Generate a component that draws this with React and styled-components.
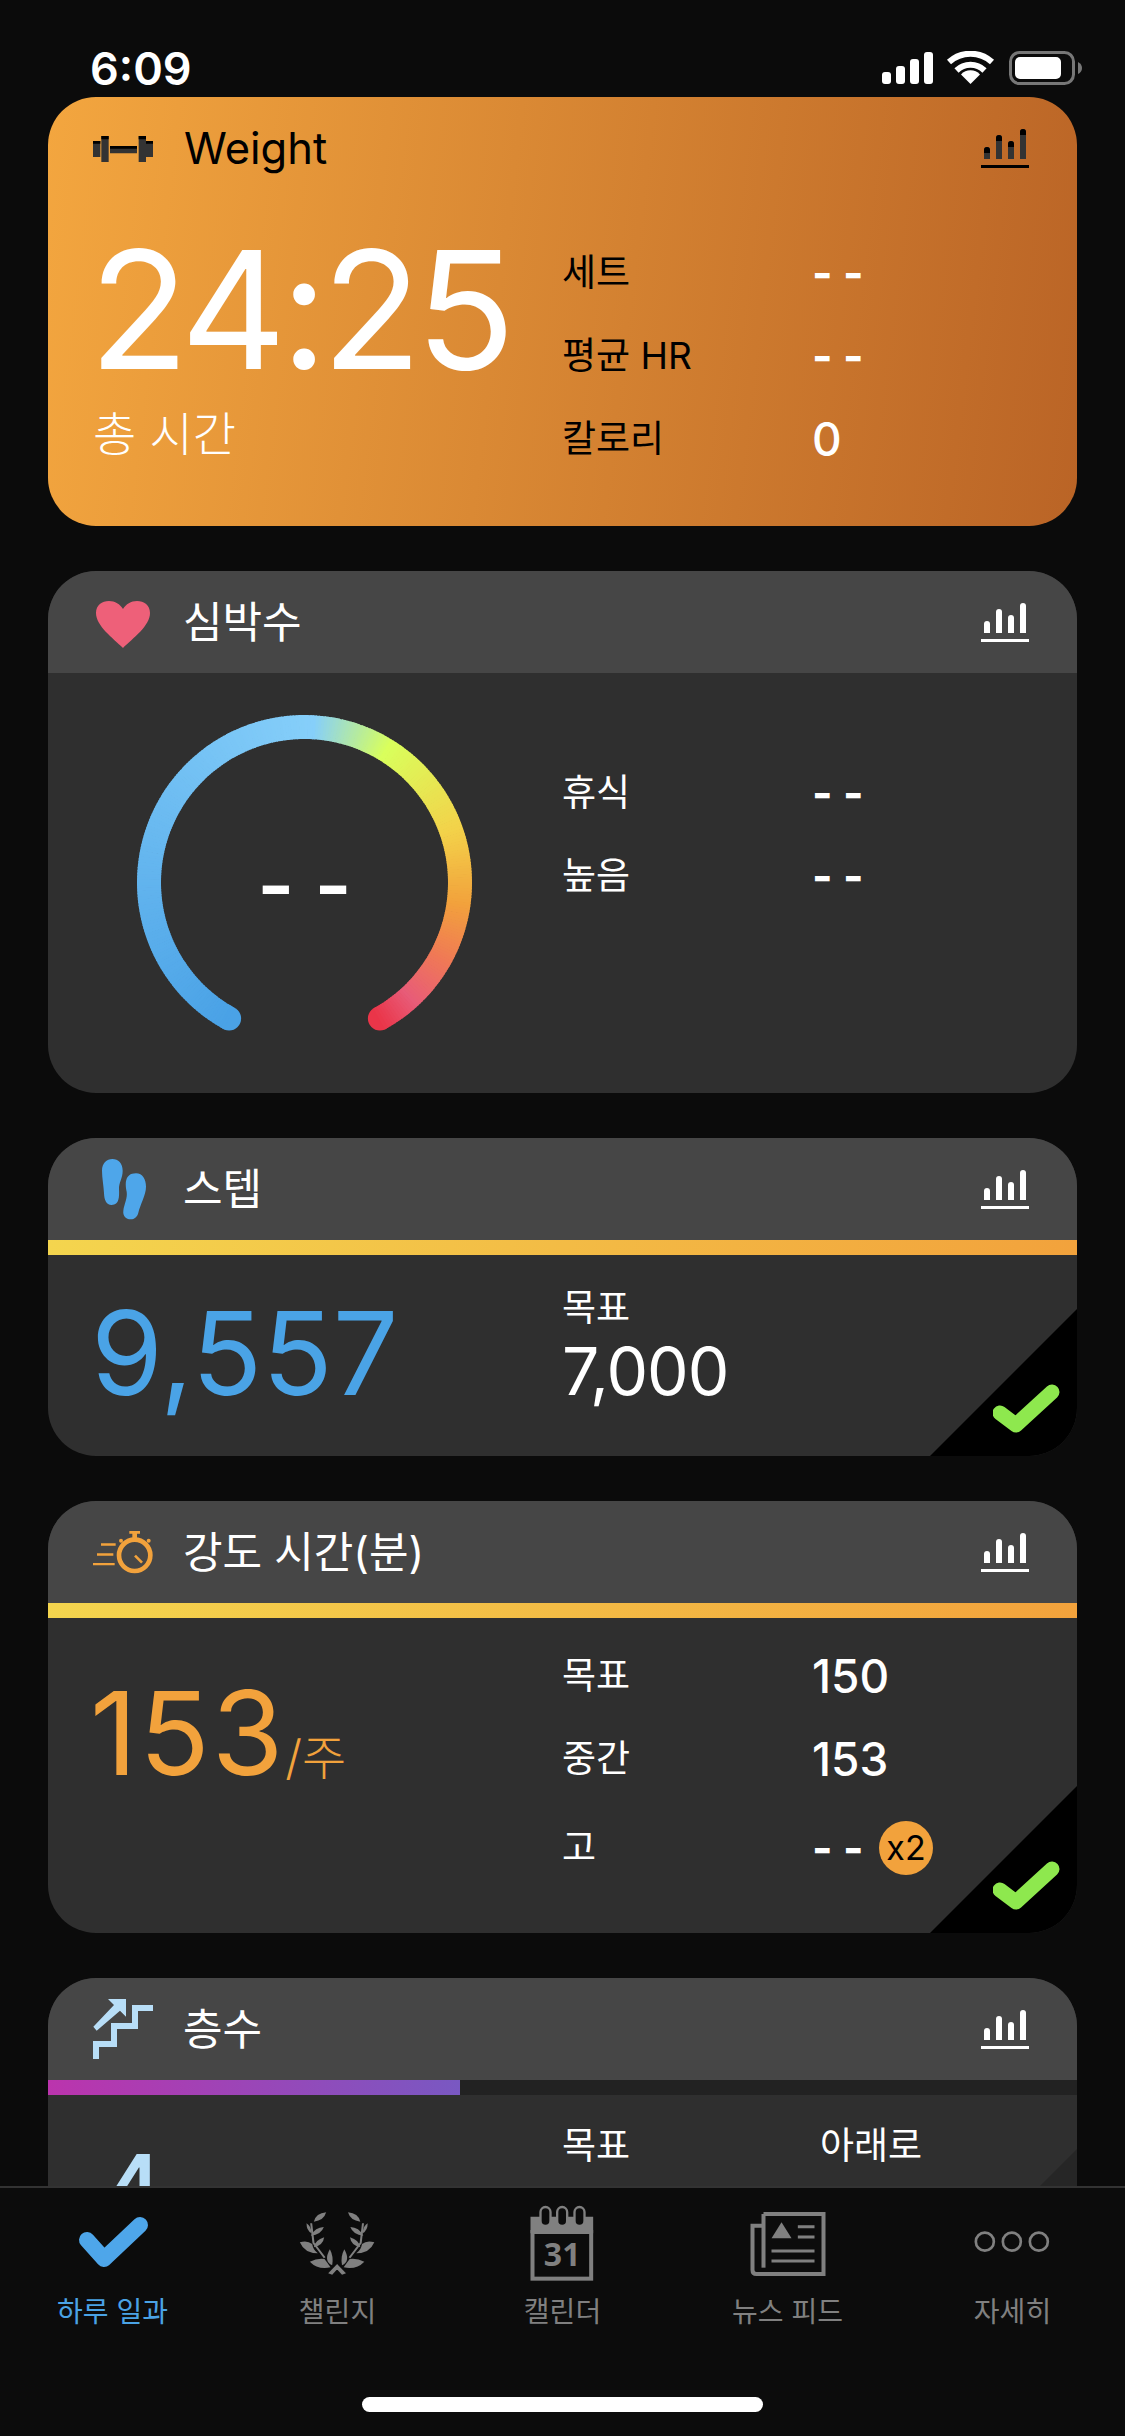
import React from 'react'
import styled, { createGlobalStyle } from 'styled-components'

const GlobalStyle = createGlobalStyle`
  html, body { margin: 0; padding: 0; background: #0b0b0b; }
  * { box-sizing: border-box; }
  body { font-family: Inter, "Noto Sans CJK KR", sans-serif; color: #fff; }
`

const Screen = styled.div`
  width: 1125px;
  height: 2436px;
  display: flex;
  flex-direction: column;
  overflow: hidden;
  background: #0b0b0b;
`
const StatusBar = styled.div`
  flex: none;
  height: 97px;
  padding: 44px 43px 0 90px;
  display: flex;
  justify-content: space-between;
  align-items: flex-start;
`
const Clock = styled.div`
  font-size: 45px;
  font-weight: 600;
  line-height: 50px;
`
const Feed = styled.div`
  flex: 1;
  min-height: 0;
  overflow: hidden;
  padding: 0 48px;
  display: flex;
  flex-direction: column;
  gap: 45px;
`
const Card = styled.section`
  flex: none;
  position: relative;
  border-radius: 48px;
  overflow: hidden;
  background: ${p => p.$hero ? 'linear-gradient(97deg, #f3a63f 0%, #ba6426 100%)' : '#2f2f2f'};
`
const CardHeader = styled.header`
  height: 102px;
  padding: 0 48px 0 45px;
  display: flex;
  align-items: center;
  background: ${p => p.$hero ? 'transparent' : '#464646'};
`
const HeaderIcon = styled.svg`
  flex: none;
  width: 60px;
  height: 80px;
`
const Title = styled.h2`
  flex: 1;
  margin: 0 0 0 ${p => p.$hero ? '31px' : '30px'};
  font-size: ${p => p.$hero ? '43.5px' : '43px'};
  line-height: 60px;
  font-weight: 400;
  color: ${p => p.$hero ? '#000' : '#fff'};
`
const ProgressTrack = styled.div`
  height: 15px;
  background: #222;
`
const ProgressFill = styled.div`
  height: 100%;
  background: ${p => p.$tone === 'purple'
    ? 'linear-gradient(90deg, #bb34ad, #7958c2)'
    : 'linear-gradient(90deg, #f4d54e, #f2a23c)'};
`
const CardBody = styled.div`
  height: ${p => p.$h}px;
  display: grid;
  grid-template-columns: 514px 1fr;
`
const LeftCol = styled.div`
  padding: ${p => p.$top}px 0 0 45px;
`
const BigNumber = styled.div`
  font-size: ${p => p.$size}px;
  line-height: ${p => p.$size}px;
  font-weight: 400;
  letter-spacing: ${p => p.$track || 0}px;
  margin-left: ${p => p.$shift || 0}px;
  color: ${p => p.$color};
  white-space: nowrap;
`
const Unit = styled.span`
  font-size: 48px;
  font-weight: 300;
  letter-spacing: 0;
`
const Caption = styled.div`
  margin-top: 12px;
  font-size: 47px;
  line-height: 60px;
  font-weight: 300;
`
const Stats = styled.div`
  padding-top: ${p => p.$top}px;
`
const Row = styled.div`
  height: ${p => p.$h || 83}px;
  display: flex;
  align-items: center;
`
const Label = styled.div`
  flex: none;
  width: 250px;
  font-size: 37px;
  line-height: 50px;
  font-weight: 400;
  color: ${p => p.$dark ? '#000' : '#fff'};
`
const Value = styled.div`
  font-size: ${p => p.$kr ? '37px' : '46px'};
  font-weight: ${p => p.$kr ? 400 : 500};
  line-height: 50px;
  margin-left: ${p => p.$kr ? '8px' : '0'};
`
const Dash = styled.div`
  width: 50px;
  font-size: 44px;
  font-weight: 700;
  line-height: 50px;
  white-space: nowrap;
`
const Badge = styled.div`
  width: 54px;
  height: 54px;
  margin-left: 17px;
  border-radius: 50%;
  background: #f2a23c;
  color: #000;
  font-size: 34px;
  display: flex;
  align-items: center;
  justify-content: center;
`
const GoalStack = styled.div`
  padding-top: 28px;
`
const GoalLabel = styled(Label)``
const GoalValue = styled.div`
  margin-top: 3px;
  font-size: 66px;
  line-height: 70px;
  font-weight: 400;
  letter-spacing: -1px;
`
const GaugeWrap = styled.div`
  position: relative;
  width: 335px;
  height: 330px;
  margin: 42px 0 0 89px;
`
const GaugeValue = styled.div`
  position: absolute;
  left: 0;
  right: 0;
  top: 130px;
  text-align: center;
  font-size: 80px;
  line-height: 80px;
  font-weight: 600;
`
const Corner = styled.div`
  position: absolute;
  right: 0;
  bottom: 0;
  width: 147px;
  height: 147px;
  background: ${p => p.$muted ? '#262626' : '#000'};
  clip-path: polygon(100% 0, 100% 100%, 0 100%);
`
const CornerCheck = styled.svg`
  position: absolute;
  left: 63px;
  top: 75px;
  width: 67px;
  height: 50px;
`
const TabBar = styled.nav`
  flex: none;
  height: 250px;
  position: relative;
  padding-top: 15px;
  border-top: 2px solid #333;
  background: #0c0c0c;
  display: grid;
  grid-template-columns: repeat(5, 225px);
  align-items: start;
  z-index: 1;
`
const Tab = styled.div`
  display: flex;
  flex-direction: column;
  align-items: center;
  color: ${p => p.$active ? '#4aa3e6' : '#808080'};
`
const TabIcon = styled.svg`
  width: 100px;
  height: 80px;
`
const TabLabel = styled.div`
  margin-top: 9px;
  font-size: 28px;
  line-height: 40px;
  white-space: nowrap;
`
const HomeIndicator = styled.div`
  position: absolute;
  left: 362px;
  bottom: 24px;
  width: 401px;
  height: 15px;
  border-radius: 8px;
  background: #fff;
`
const SignalIcons = styled.svg`
  width: 200px;
  height: 40px;
  margin-top: 7px;
`

const ChartIcon = ({ dark }) => {
  const bars = [[3, 18], [15, 6], [27, 12], [39, 0]]
  return (
    <svg width="48" height="39" viewBox="0 0 48 39" style={{ flex: 'none' }}>
      {bars.map(([x, y]) => (
        <g key={x}>
          <path d={`M${x} ${y + 3}a3 3 0 0 1 6 0V30H${x}Z`} fill={dark ? '#333' : '#fff'} />
          {dark && <path d={`M${x} ${y + 3}a3 3 0 0 1 6 0v3H${x}Z`} fill="#000" />}
        </g>
      ))}
      <rect x="0" y="36" width="48" height="3" fill={dark ? '#000' : '#fff'} />
    </svg>
  )
}

const Dumbbell = () => (
  <HeaderIcon viewBox="99 24 180 240">
    <path d="M99 123h22v48H99zM124 108h22v78h-22zM150 138h81v22h-81zM236 108h22v78h-22zM258 123h21v48h-21z" fill="#333" />
    <path d="M99 123h22v8H99zM124 108h22v10h-22zM150 138h81v8h-81zM236 108h22v10h-22zM258 123h21v8h-21z" fill="#000" />
  </HeaderIcon>
)

const Heart = () => (
  <HeaderIcon viewBox="0 0 60 80">
    <path d="M30 66 C20 56 3 44 3 31 C3 23 9 19 16 19 C22 19 27 22 30 27 C33 22 38 19 44 19 C51 19 57 23 57 31 C57 44 40 56 30 66Z" fill="#ee6079" />
  </HeaderIcon>
)

const Feet = () => (
  <HeaderIcon viewBox="99 57 180 240">
    <path d="M157 87C175 87 188 100 188 122C188 145 176 158 177 178C178 200 178 225 155 225C138 225 133 210 132 190C131 165 126 145 126 122C126 100 140 87 157 87Z" fill="#4ea6ea" />
    <path d="M228 130C248 130 258 148 258 170C258 195 240 225 235 248C232 260 224 268 212 268C198 268 188 258 190 242C193 220 203 205 200 185C196 165 192 130 228 130Z" fill="#4ea6ea" />
  </HeaderIcon>
)

const Stopwatch = () => (
  <HeaderIcon viewBox="69 36 180 240">
    <g fill="#f2a23c">
      <path d="M178 93h32v8h-9v16h-14v-16h-9zM93 130h44v7H93zM81 160h49v7H81zM69 189h65v7H69z" />
      <circle cx="153" cy="122" r="6" />
      <circle cx="236" cy="122" r="6" />
    </g>
    <circle cx="194" cy="166" r="47" fill="#464646" stroke="#f2a23c" strokeWidth="14" />
    <path d="M195 167L216 188" stroke="#f2a23c" strokeWidth="8" />
  </HeaderIcon>
)

const Stairs = () => (
  <HeaderIcon viewBox="69 27 180 240">
    <path d="M114 57H168V110L150 92L80 152L70 140L132 75Z" fill="#b8def7" />
    <path d="M78 237V192H132V138H195V84H249" fill="none" stroke="#b8def7" strokeWidth="18" />
  </HeaderIcon>
)

const CheckMark = ({ color }) => (
  <path d="M7 29L23 41L59 8" fill="none" stroke={color} strokeWidth="15" strokeLinejoin="round" strokeLinecap="round" />
)

const LaurelHalf = () => (
  <g>
    <path d="M100 95Q106 70 137 67Q130 92 100 95Z" />
    <path d="M78 100Q92 108 93 130Q78 122 78 100Z" />
    <path d="M91 137Q104 112 130 111Q122 134 91 137Z" />
    <path d="M58 157Q80 150 95 162Q98 180 112 190Q72 190 58 157Z" />
    <path d="M100 172Q104 150 131 142Q128 166 100 172Z" />
    <path d="M88 215Q110 204 132 207Q142 220 150 232Q112 240 88 215Z" />
    <path d="M148 178Q160 200 155 226Q128 214 148 178Z" />
    <path d="M89 100L96 160L130 205L135 202L102 158L95 100Z" />
    <path d="M143 250L170 222V238L155 254Z" />
  </g>
)

const WreathIcon = () => (
  <TabIcon viewBox="22.5 39 300 240" fill="#808080">
    <LaurelHalf />
    <g transform="translate(339.5 0) scale(-1 1)">
      <LaurelHalf />
    </g>
  </TabIcon>
)

const CalendarIcon = () => (
  <TabIcon viewBox="697.5 39 300 240">
    <path d="M750 80H938V130H750Z" fill="#808080" />
    <rect x="756" y="126" width="176" height="140" fill="none" stroke="#808080" strokeWidth="12" />
    {[780, 830, 882].map(x => (
      <rect key={x} x={x} y="51" width="30" height="57" rx="15" fill="#0c0c0c" stroke="#808080" strokeWidth="7" />
    ))}
    <text x="845" y="227" textAnchor="middle" fontFamily="'Noto Sans', sans-serif" fontWeight="700" fontSize="96" fill="#808080">31</text>
  </TabIcon>
)

const NewsIcon = () => (
  <TabIcon viewBox="52.5 39 300 240">
    <path d="M129 72H309V252H108Q96 252 96 240V107H129" fill="none" stroke="#808080" strokeWidth="12" />
    <path d="M129 72V233" stroke="#808080" strokeWidth="12" />
    <path d="M183 97L213 145H153Z" fill="#808080" />
    <path d="M232 110H282M232 141H282M153 183H282M153 213H282" stroke="#808080" strokeWidth="9" />
  </TabIcon>
)

const DotsIcon = () => (
  <TabIcon viewBox="727.5 39 300 240">
    {[793, 874, 955].map(x => (
      <circle key={x} cx={x} cy="155" r="27" fill="none" stroke="#808080" strokeWidth="8" />
    ))}
  </TabIcon>
)

const gaugeStops = [
  [-151, [74, 162, 230]],
  [3, [134, 207, 250]],
  [31, [217, 255, 92]],
  [70, [243, 210, 74]],
  [97, [242, 162, 60]],
  [118, [240, 122, 85]],
  [137, [232, 92, 120]],
  [151, [234, 53, 73]],
]

const gaugeColor = deg => {
  let i = 0
  while (i < gaugeStops.length - 2 && deg > gaugeStops[i + 1][0]) i++
  const [a, ca] = gaugeStops[i]
  const [b, cb] = gaugeStops[i + 1]
  const t = Math.min(1, Math.max(0, (deg - a) / (b - a)))
  return `rgb(${ca.map((v, k) => Math.round(v + (cb[k] - v) * t)).join(',')})`
}

const polar = deg => {
  const r = 155.5
  const rad = (deg * Math.PI) / 180
  return [167.5 + r * Math.sin(rad), 167.5 - r * Math.cos(rad)]
}

const GaugeArc = () => {
  const segs = []
  for (let d = -151; d < 151; d++) {
    const [x1, y1] = polar(d)
    const [x2, y2] = polar(d + 1.3)
    segs.push(<path key={d} d={`M${x1} ${y1}A155.5 155.5 0 0 1 ${x2} ${y2}`} stroke={gaugeColor(d)} strokeWidth="24" fill="none" />)
  }
  const [sx, sy] = polar(-151)
  const [ex, ey] = polar(151)
  return (
    <svg width="335" height="330" viewBox="0 0 335 330">
      <circle cx={sx} cy={sy} r="12" fill={gaugeColor(-151)} />
      <circle cx={ex} cy={ey} r="12" fill={gaugeColor(151)} />
      {segs}
    </svg>
  )
}

const Goal = ({ muted }) => (
  <Corner $muted={muted}>
    {!muted && (
      <CornerCheck viewBox="0 0 67 50">
        <CheckMark color="#8ee84e" />
      </CornerCheck>
    )}
  </Corner>
)

export default function App() {
  return (
    <Screen>
      <GlobalStyle />
      <StatusBar>
        <Clock>6:09</Clock>
        <SignalIcons viewBox="882 52 200 40">
          <g fill="#fff">
            <rect x="882" y="73" width="9" height="12" rx="3" />
            <rect x="896" y="67" width="9" height="18" rx="3" />
            <rect x="910" y="60" width="9" height="25" rx="3" />
            <rect x="924" y="53" width="9" height="32" rx="3" />
            <path d="M970.5 85L961 75.5A13 13 0 0 1 980 75.5Z" />
          </g>
          <path d="M949 63A32 32 0 0 1 992 63M956.5 71.5A20 20 0 0 1 984.5 71.5" fill="none" stroke="#fff" strokeWidth="6" />
          <rect x="1010.5" y="53.5" width="63" height="31" rx="9" fill="none" stroke="#777" strokeWidth="3" />
          <rect x="1015" y="58" width="46" height="22" rx="5" fill="#fff" />
          <path d="M1078 63q4 2 4 6t-4 6z" fill="#777" />
        </SignalIcons>
      </StatusBar>

      <Feed>
        <Card $hero>
          <CardHeader $hero>
            <Dumbbell />
            <Title $hero>Weight</Title>
            <ChartIcon dark />
          </CardHeader>
          <CardBody $h={327}>
            <LeftCol $top={29}>
              <BigNumber $size={164} $color="#fff" $track={-6} $shift={-4}>24:25</BigNumber>
              <Caption>총 시간</Caption>
            </LeftCol>
            <Stats $top={32}>
              <Row><Label $dark>세트</Label><Dash>- -</Dash></Row>
              <Row><Label $dark>평균 HR</Label><Dash>- -</Dash></Row>
              <Row><Label $dark>칼로리</Label><Value>0</Value></Row>
            </Stats>
          </CardBody>
        </Card>

        <Card>
          <CardHeader>
            <Heart />
            <Title>심박수</Title>
            <ChartIcon />
          </CardHeader>
          <CardBody $h={420}>
            <div>
              <GaugeWrap>
                <GaugeArc />
                <GaugeValue>- -</GaugeValue>
              </GaugeWrap>
            </div>
            <Stats $top={78}>
              <Row><Label>휴식</Label><Dash>- -</Dash></Row>
              <Row><Label>높음</Label><Dash>- -</Dash></Row>
            </Stats>
          </CardBody>
        </Card>

        <Card>
          <CardHeader>
            <Feet />
            <Title>스텝</Title>
            <ChartIcon />
          </CardHeader>
          <ProgressTrack><ProgressFill style={{ width: '100%' }} /></ProgressTrack>
          <CardBody $h={201}>
            <LeftCol $top={40}>
              <BigNumber $size={116} $color="#4aa3e6" $shift={-2}>9,557</BigNumber>
            </LeftCol>
            <GoalStack>
              <GoalLabel>목표</GoalLabel>
              <GoalValue>7,000</GoalValue>
            </GoalStack>
          </CardBody>
          <Goal />
        </Card>

        <Card>
          <CardHeader>
            <Stopwatch />
            <Title>강도 시간(분)</Title>
            <ChartIcon />
          </CardHeader>
          <ProgressTrack><ProgressFill style={{ width: '100%' }} /></ProgressTrack>
          <CardBody $h={315}>
            <LeftCol $top={57}>
              <BigNumber $size={116} $color="#f2a23c" $track={2} $shift={-3}>153<Unit>/주</Unit></BigNumber>
            </LeftCol>
            <Stats $top={16}>
              <Row><Label>목표</Label><Value>150</Value></Row>
              <Row><Label>중간</Label><Value>153</Value></Row>
              <Row $h={95}><Label>고</Label><Dash>- -</Dash><Badge>x2</Badge></Row>
            </Stats>
          </CardBody>
          <Goal />
        </Card>

        <Card>
          <CardHeader>
            <Stairs />
            <Title>층수</Title>
            <ChartIcon />
          </CardHeader>
          <ProgressTrack><ProgressFill $tone="purple" style={{ width: '40%' }} /></ProgressTrack>
          <CardBody $h={201}>
            <LeftCol $top={43}>
              <BigNumber $size={116} $color="#b8def7">4</BigNumber>
            </LeftCol>
            <Stats $top={9}>
              <Row><Label>목표</Label><Value $kr>아래로</Value></Row>
            </Stats>
          </CardBody>
          <Goal muted />
        </Card>
      </Feed>

      <TabBar>
        <Tab $active>
          <TabIcon viewBox="0 0 100 80">
            <path d="M24 37L41 56L77 22" fill="none" stroke="#4ea6ea" strokeWidth="16" strokeLinejoin="round" strokeLinecap="round" />
          </TabIcon>
          <TabLabel>하루 일과</TabLabel>
        </Tab>
        <Tab><WreathIcon /><TabLabel>챌린지</TabLabel></Tab>
        <Tab><CalendarIcon /><TabLabel>캘린더</TabLabel></Tab>
        <Tab><NewsIcon /><TabLabel>뉴스 피드</TabLabel></Tab>
        <Tab><DotsIcon /><TabLabel>자세히</TabLabel></Tab>
        <HomeIndicator />
      </TabBar>
    </Screen>
  )
}
